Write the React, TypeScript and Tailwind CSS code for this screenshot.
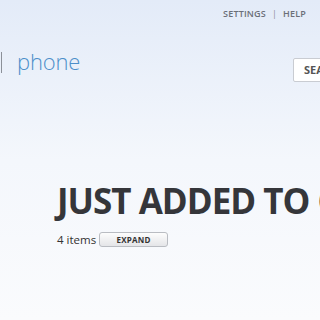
import React from 'react';

export default function App() {
  return (
    <div
      className="w-[320px] h-[320px] overflow-hidden bg-gradient-to-b from-[#e3ebf8] via-[#f4f7fc] to-[#fafbfd] text-[#333]"
      style={{ fontFamily: '"Open Sans", "Noto Sans", sans-serif' }}
    >
      {/* Top links */}
      <div className="flex justify-end items-center h-[28px] pr-[14px] gap-[6px] text-[9px] font-semibold tracking-[0.02em] text-[#6b6f78]">
        <span>SETTINGS</span>
        <span className="font-normal text-[#8a8e96]">|</span>
        <span>HELP</span>
      </div>

      {/* Logo row + search */}
      <div className="flex items-start h-[60px]">
        <div className="flex items-center mt-[24px] pl-[1px]">
          <div className="w-[1px] h-[21px] bg-[#8c9098]" />
          <span className="ml-[15px] text-[22px] font-light leading-none tracking-[-0.2px] text-[#4d8fca] -mt-[3px]">phone</span>
        </div>
        <div className="ml-auto mt-[30px] mr-[-40px] w-[67px] h-[24px] border border-[#c9ccd2] rounded-[2px] bg-white flex items-center pl-[10px] text-[11px] font-bold text-[#555]">
          SEARCH
        </div>
      </div>

      {/* Content */}
      <div className="pl-[57px] pt-[95px]">
        <h1 className="whitespace-nowrap text-[35px] font-bold leading-none tracking-[-1px] text-[#35363a]">
          JUST ADDED TO CART
        </h1>
        <div className="flex items-center mt-[13px] gap-[3px]">
          <span className="text-[11.5px] text-[#333]">4 items</span>
          <button className="w-[69px] h-[15px] rounded-[3px] border border-[#b9bcc2] bg-gradient-to-b from-[#fdfdfd] to-[#e4e5e8] text-[8px] font-bold tracking-[0.03em] text-[#333] leading-none">
            EXPAND
          </button>
        </div>
      </div>
    </div>
  );
}
